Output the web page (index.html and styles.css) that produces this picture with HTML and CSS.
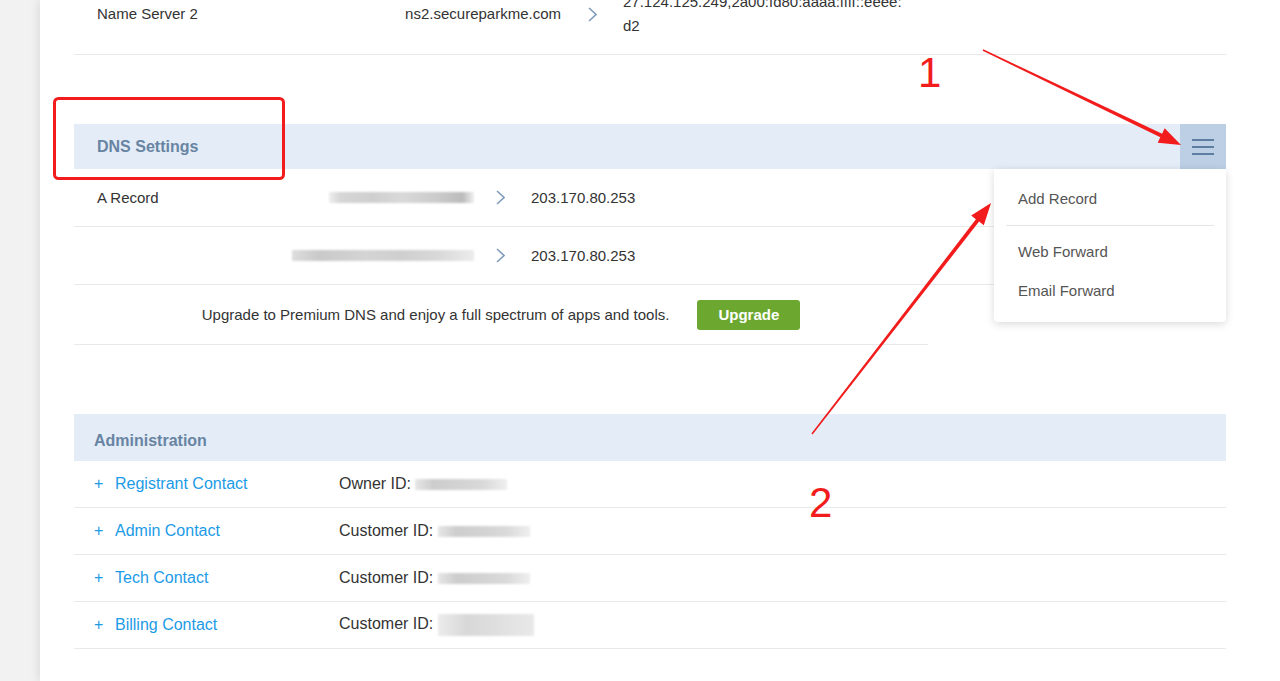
FILE: index.html
```html
<!DOCTYPE html>
<html lang="en">
<head>
    <meta charset="UTF-8">
    <meta name="viewport" content="width=device-width, initial-scale=1.0">
    <title>Domain Details</title>
    <link rel="stylesheet" href="styles.css">
</head>
<body>
    <div class="page">
        <aside class="rail"></aside>

        <main class="panel">
            <!-- Name servers -->
            <div class="ns-table">
                <div class="ns-row">
                    <div class="ns-label">Name Server 2</div>
                    <div class="ns-host">ns2.secureparkme.com</div>
                    <div class="ns-arrow">
                        <svg width="9" height="15" viewBox="0 0 9 15"><polyline points="1,1 8,7.5 1,14" fill="none" stroke="#7f9cbb" stroke-width="1.6"/></svg>
                    </div>
                    <div class="ns-value">27.124.125.249,2a00:fd80:aaaa:ffff::eeee:d2</div>
                </div>
            </div>

            <!-- DNS Settings -->
            <section class="dns">
                <div class="section-head">
                    <h2>DNS Settings</h2>
                    <button class="menu-btn" aria-label="Menu">
                        <svg width="22" height="16" viewBox="0 0 22 16"><path d="M0 1h22M0 8h22M0 15h22" stroke="#5e7ea1" stroke-width="2"/></svg>
                    </button>
                    <ul class="dropdown">
                        <li>Add Record</li>
                        <li class="divider"></li>
                        <li>Web Forward</li>
                        <li>Email Forward</li>
                    </ul>
                </div>

                <div class="dns-row">
                    <div class="dns-type">A Record</div>
                    <div class="dns-host"><span class="blur blur-a"></span></div>
                    <div class="dns-arrow">
                        <svg width="9" height="15" viewBox="0 0 9 15"><polyline points="1,1 8,7.5 1,14" fill="none" stroke="#7f9cbb" stroke-width="1.6"/></svg>
                    </div>
                    <div class="dns-value">203.170.80.253</div>
                </div>
                <div class="dns-row">
                    <div class="dns-type"></div>
                    <div class="dns-host"><span class="blur blur-b"></span></div>
                    <div class="dns-arrow">
                        <svg width="9" height="15" viewBox="0 0 9 15"><polyline points="1,1 8,7.5 1,14" fill="none" stroke="#7f9cbb" stroke-width="1.6"/></svg>
                    </div>
                    <div class="dns-value">203.170.80.253</div>
                </div>

                <div class="upgrade-row">
                    <p>Upgrade to Premium DNS and enjoy a full spectrum of apps and tools.</p>
                    <a href="#" class="upgrade-btn">Upgrade</a>
                </div>
            </section>

            <!-- Administration -->
            <section class="admin">
                <div class="section-head admin-head">
                    <h2>Administration</h2>
                </div>
                <div class="admin-row">
                    <a href="#" class="contact"><span class="plus">+</span>Registrant Contact</a>
                    <div class="contact-id">Owner ID: <span class="blur blur-id"></span></div>
                </div>
                <div class="admin-row">
                    <a href="#" class="contact"><span class="plus">+</span>Admin Contact</a>
                    <div class="contact-id">Customer ID: <span class="blur blur-id"></span></div>
                </div>
                <div class="admin-row">
                    <a href="#" class="contact"><span class="plus">+</span>Tech Contact</a>
                    <div class="contact-id">Customer ID: <span class="blur blur-id"></span></div>
                </div>
                <div class="admin-row">
                    <a href="#" class="contact"><span class="plus">+</span>Billing Contact</a>
                    <div class="contact-id">Customer ID: <span class="blur blur-tall"></span></div>
                </div>
            </section>
        </main>

        <!-- Screenshot annotations -->
        <svg class="annotations" width="1280" height="681" viewBox="0 0 1280 681">
            <rect x="54.5" y="98.5" width="229" height="80" rx="4" fill="none" stroke="#f21c1c" stroke-width="3"/>
            <polygon fill="#f21c1c" points="983.3,49.3 1162.1,133.7 1164.7,128.3 1181,145 1157.7,142.7 1160.3,137.3 982.7,50.7"/>
            <polygon fill="#f21c1c" points="812.6,434.4 979.1,221.6 983.8,225.3 991,203 971.2,215.5 975.9,219.2 811.4,433.6"/>
            <text class="mark" x="918" y="87">1</text>
            <text class="mark" x="809" y="517">2</text>
        </svg>
    </div>
</body>
</html>
```

FILE: styles.css
```css
* {
    margin: 0;
    padding: 0;
    box-sizing: border-box;
}

body {
    font-family: 'Liberation Sans', Arial, sans-serif;
    font-size: 15px;
    color: #333;
    background: #f2f2f2;
    overflow: hidden;
}

.page {
    display: flex;
    min-height: 100vh;
    position: relative;
}

.rail {
    width: 40px;
    flex-shrink: 0;
}

.panel {
    flex: 1;
    background: #fff;
    padding: 0 54px 0 34px;
    box-shadow: -3px 0 8px rgba(0, 0, 0, 0.08);
}

/* Name servers */
.ns-table {
    margin-top: -26px;
}

.ns-row {
    display: flex;
    align-items: center;
    padding: 16px 0;
    line-height: 24px;
    border-bottom: 1px solid #e9e9e9;
}

.ns-label {
    width: 220px;
    padding-left: 23px;
}

.ns-host {
    width: 277px;
    text-align: right;
    padding-right: 10px;
}

.ns-arrow,
.dns-arrow {
    width: 42px;
    display: flex;
    justify-content: center;
}

.ns-value {
    width: 300px;
    padding-left: 10px;
    padding-right: 6px;
    word-break: break-all;
}

/* Section headers */
.dns {
    margin-top: 69px;
}

.section-head {
    position: relative;
    height: 45px;
    background: #e4ecf7;
    display: flex;
    align-items: center;
    justify-content: space-between;
    padding-left: 23px;
}

.section-head h2 {
    font-size: 16px;
    font-weight: bold;
    color: #6884a3;
}

.menu-btn {
    width: 46px;
    height: 45px;
    border: none;
    background: #bccfe4;
    display: flex;
    align-items: center;
    justify-content: center;
    cursor: pointer;
}

.dropdown {
    position: absolute;
    top: 100%;
    right: 0;
    width: 232px;
    background: #fff;
    list-style: none;
    padding: 10px 0 12px;
    border-radius: 0 0 4px 4px;
    box-shadow: 0 2px 8px rgba(0, 0, 0, 0.15);
    z-index: 10;
}

.dropdown li {
    height: 39px;
    line-height: 39px;
    padding-left: 24px;
    color: #555;
}

.dropdown li.divider {
    height: 1px;
    background: #e5e5e5;
    margin: 7px 12px 6px;
    padding: 0;
}

/* DNS rows */
.dns-row {
    display: flex;
    align-items: center;
    height: 58px;
    border-bottom: 1px solid #e9e9e9;
}

.dns-type {
    width: 200px;
    padding-left: 23px;
}

.dns-host {
    width: 208px;
    display: flex;
    justify-content: flex-end;
    padding-right: 8px;
}

.dns-arrow {
    width: 36px;
}

.dns-value {
    padding-left: 13px;
}

.blur {
    display: inline-block;
    height: 11px;
    filter: blur(1.2px);
    vertical-align: middle;
}

.blur-a {
    width: 145px;
    background: linear-gradient(90deg, #eee 0%, #d6d6d6 8%, #cfcfcf 30%, #d9d9d9 50%, #cbcbcb 75%, #bbb 92%, #f0f0f0 100%);
}

.blur-b {
    width: 182px;
    background: linear-gradient(90deg, #ddd 0%, #c9c9c9 15%, #d4d4d4 40%, #cfcfcf 60%, #d8d8d8 80%, #ececec 100%);
}

.blur-id {
    width: 92px;
    background: linear-gradient(90deg, #e6e6e6 0%, #cdcdcd 20%, #d3d3d3 50%, #dadada 75%, #efefef 100%);
}

.blur-tall {
    width: 96px;
    height: 22px;
    background: linear-gradient(90deg, #ececec 0%, #d8d8d8 30%, #dfdfdf 60%, #e9e9e9 100%);
}

/* Upgrade */
.upgrade-row {
    width: 854px;
    height: 60px;
    display: flex;
    align-items: center;
    justify-content: center;
    gap: 28px;
    border-bottom: 1px solid #e9e9e9;
}

.upgrade-btn {
    background: #6ca830;
    color: #fff;
    font-weight: bold;
    text-decoration: none;
    height: 30px;
    line-height: 30px;
    padding: 0 21px;
    border-radius: 3px;
}

/* Administration */
.admin {
    margin-top: 69px;
}

.admin-head {
    height: 47px;
    align-items: flex-start;
    padding-top: 17px;
    padding-left: 20px;
}

.admin-head h2 {
    line-height: 20px;
}

.admin-row {
    display: flex;
    align-items: center;
    height: 47px;
    font-size: 16px;
    border-bottom: 1px solid #e9e9e9;
}

.contact {
    width: 245px;
    padding-left: 20px;
    color: #1c9be6;
    text-decoration: none;
}

.plus {
    display: inline-block;
    width: 21px;
}

.contact-id {
    padding-left: 20px;
}

/* Annotations */
.annotations {
    position: absolute;
    top: 0;
    left: 0;
    pointer-events: none;
}

.mark {
    font-family: 'Liberation Sans', Arial, sans-serif;
    font-size: 42px;
    fill: #f21c1c;
}
```
